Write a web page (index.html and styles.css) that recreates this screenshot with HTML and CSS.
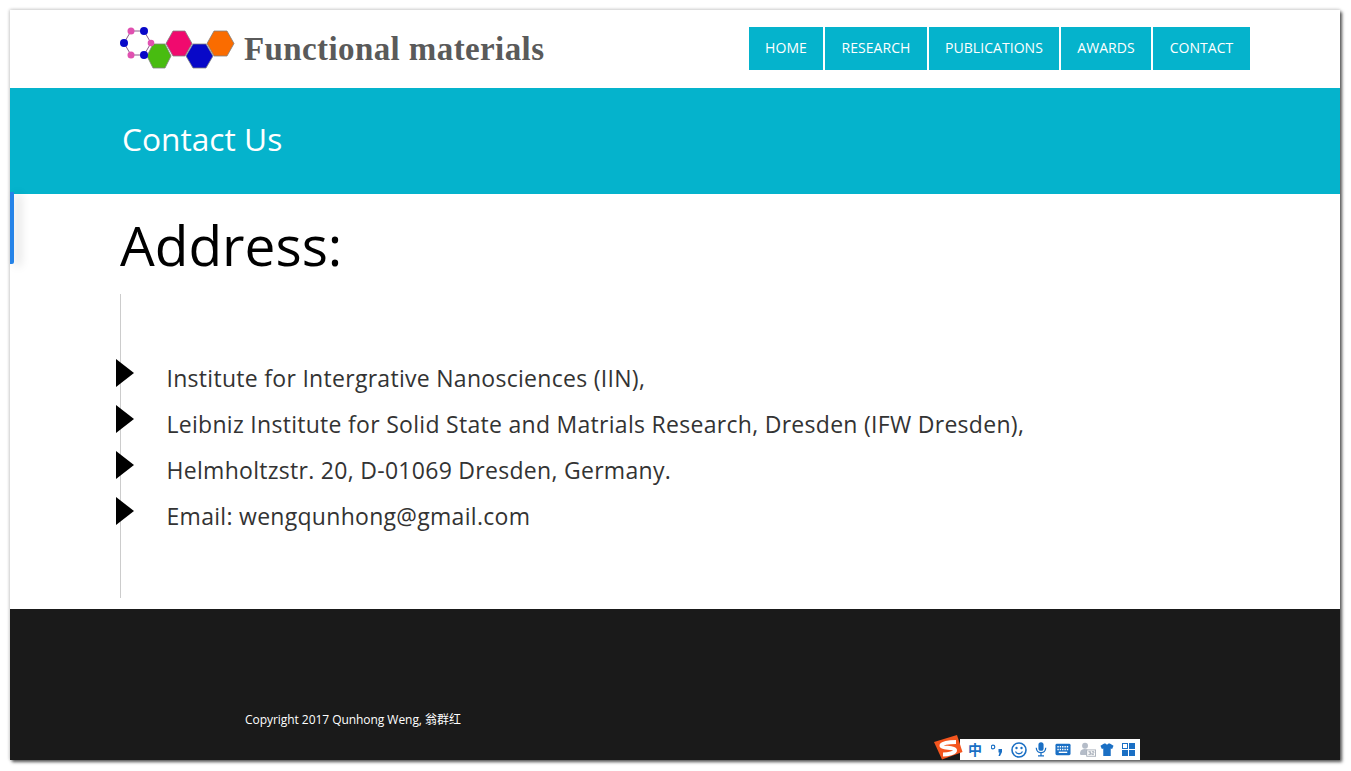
FILE: index.html
```html
<!DOCTYPE html>
<html lang="en">
<head>
<meta charset="utf-8">
<title>Contact Us</title>
<link rel="stylesheet" href="styles.css">
</head>
<body>
<div class="window">
  <header class="top">
    <div class="brand">
      <svg class="logo" width="118" height="44" viewBox="0 0 118 44">
        <path fill="none" stroke="#8a5a8a" d="M13 5H26L33 17L26 29H13L6 17Z"/>
        <g stroke="#808080" stroke-width=".8">
          <path fill="#48bc10" d="M29 30L35 18H47L53 30L47 42H35Z"/>
          <path fill="#f00a6e" d="M48 17.500L55 5H67L74 17.500L67 30H55Z"/>
          <path fill="#0808c8" d="M68 30L75 18H88L95 30L88 42H75Z"/>
          <path fill="#fa6c00" d="M89 17.500L96 5H109L116 17.500L109 30H96Z"/>
        </g>
        <circle cx="13" cy="5" r="3.500" fill="#e050b0"/>
        <circle cx="26" cy="5" r="4" fill="#0808c8"/>
        <circle cx="6" cy="17" r="4" fill="#0808c8"/>
        <circle cx="33" cy="17" r="3.300" fill="#e050b0"/>
        <circle cx="13" cy="29" r="3.500" fill="#e050b0"/>
        <circle cx="26" cy="29" r="4" fill="#0808c8"/>
      </svg>
      <span class="site-name">Functional materials</span>
    </div>
    <nav class="nav">
      <a class="nav-item w74">HOME</a>
      <a class="nav-item w102">RESEARCH</a>
      <a class="nav-item w130">PUBLICATIONS</a>
      <a class="nav-item w90">AWARDS</a>
      <a class="nav-item w97">CONTACT</a>
    </nav>
  </header>
  <section class="banner"><h2 class="banner-title">Contact Us</h2></section>
  <main class="content">
    <span class="side-tab"></span>
    <h1 class="heading">Address:</h1>
    <ul class="address">
      <li class="row"><span class="arrow"></span>Institute for Intergrative Nanosciences (IIN),</li>
      <li class="row"><span class="arrow"></span>Leibniz Institute for Solid State and Matrials Research, Dresden (IFW Dresden),</li>
      <li class="row"><span class="arrow"></span>Helmholtzstr. 20, D-01069 Dresden, Germany.</li>
      <li class="row"><span class="arrow"></span>Email: wengqunhong@gmail.com</li>
    </ul>
  </main>
  <footer class="footer">
    <p class="copyright">Copyright 2017 Qunhong Weng, 翁群红</p>
    <div class="ime">
      <svg class="ime-s" width="30" height="26" viewBox="0 0 30 26">
        <path fill="#f4551e" d="M0 8L23 1L28.500 18L8 25.500Z"/>
        <path fill="none" stroke="#fff" stroke-width="4" d="M22 8C15 8 7 9 7.500 12C8 15 20 12.500 21 16C21.500 19 14 20.500 9 20.500"/>
      </svg>
      <div class="ime-bar">
        <span class="ime-zh">中</span>
        <svg class="plus1" width="11" height="14" viewBox="0 0 11 14"><circle cx="2" cy="4" r="1.800" fill="none" stroke="#1a6fc4" stroke-width="1.200"/><path fill="#1a6fc4" d="M7.500 6h3.500v3l-2 4h-1.500l1-3.500h-1z"/></svg>
        <svg class="plus1" width="16" height="16" viewBox="0 0 16 16"><circle cx="8" cy="8" r="7" fill="none" stroke="#1a6fc4" stroke-width="1.600"/><circle cx="5.500" cy="6" r="1.200" fill="#1a6fc4"/><circle cx="10.500" cy="6" r="1.200" fill="#1a6fc4"/><path d="M4.500 9.500C6 12.500 10 12.500 11.500 9.500" fill="none" stroke="#1a6fc4" stroke-width="1.300"/></svg>
        <svg width="12" height="17" viewBox="0 0 14 17"><rect x="4" y="0" width="6" height="10" rx="3" fill="#1a6fc4"/><path d="M1.500 6.500C1.500 14 12.500 14 12.500 6.500M7 12V15.500M3.500 16H10.500" fill="none" stroke="#1a6fc4" stroke-width="1.500"/></svg>
        <svg width="16" height="13" viewBox="0 0 17 13"><rect x=".5" y=".5" width="16" height="12" rx="1.500" fill="#1a6fc4"/><path d="M2.500 3.500H14.500M2.500 6.500H14.500" stroke="#fff" stroke-width="1.500" stroke-dasharray="1.500 1"/><path d="M4 9.500H13" stroke="#fff" stroke-width="1.500"/></svg>
        <svg class="plus1" width="16" height="17" viewBox="0 0 19 17"><circle cx="6" cy="4" r="3.500" fill="#b4bcc8"/><path d="M0 14C0 9 3 8 6 8C8 8 9 9 10 10V15H1Z" fill="#b4bcc8"/><rect x="8" y="9" width="10.500" height="7.500" fill="#fff" stroke="#a0a8b4"/><path d="M10 11H12.500V12.500H10.500M12.500 12.500V14.500H10M14 11H16.500V12.800H14V14.500H16.500" fill="none" stroke="#a0a8b4"/></svg>
        <svg class="minus4" width="14" height="14" viewBox="0 0 15 15"><path fill="#1a6fc4" d="M4.500 .5H6C6.500 2 8.500 2 9 .5H10.500L14.500 3L13 6.500L11.500 6V14H3.500V6L2 6.500L.5 3Z"/></svg>
        <svg width="13" height="13" viewBox="0 0 13 13"><rect x=".5" y=".5" width="5" height="5" fill="none" stroke="#1a6fc4"/><g fill="#1a6fc4"><rect x="7" y="0" width="6" height="6"/><rect x="0" y="7" width="6" height="6"/><rect x="7" y="7" width="6" height="6"/></g></svg>
      </div>
    </div>
  </footer>
</div>
</body>
</html>
```
FILE: styles.css
```css
* { box-sizing: border-box; }
html, body { margin: 0; height: 100%; background: #fff; overflow: hidden; }
body { padding: 10px 11px 11px 10px; font-family: "Open Sans", sans-serif; }
.window { display: flex; flex-direction: column; height: 750px; background: #fff; box-shadow: 2px 2px 3px #555, 0 -1px 3px #ddd, -1px 0 3px #ddd; position: relative; }
.top { height: 78px; display: flex; justify-content: space-between; padding: 13px 90px 0 108px; }
.brand { display: flex; align-items: flex-start; gap: 8px; height: 47px; }
.logo { display: block; margin-top: 3px; flex: none; }
.site-name { font-family: "Liberation Serif", serif; font-weight: 700; font-size: 33px; letter-spacing: .4px; line-height: 52px; color: #5a5a5a; white-space: nowrap; }
.nav { display: flex; gap: 2px; height: 43px; margin-top: 4px; }
.nav-item { display: flex; align-items: center; justify-content: center; background: #05b3cc; color: #fff; font-size: 14px; letter-spacing: .05px; padding-bottom: 2px; }
.w74 { width: 74px; }
.w102 { width: 102px; }
.w130 { width: 130px; }
.w90 { width: 90px; }
.w97 { width: 97px; }
.banner { height: 106px; background: #05b3cc; display: flex; align-items: center; padding: 0 0 4px 112px; }
.banner-title { margin: 0; font-size: 31.700px; font-weight: 400; color: #fff; line-height: 1.4; }
.content { height: 415px; padding: 12px 0 0 110px; position: relative; }
.side-tab { position: absolute; left: 0; top: -2px; width: 4px; height: 72px; background: #2583e8; box-shadow: 6px 2px 10px rgba(0,0,0,.18); border-radius: 0 0 2px 0; }
.heading { margin: 0; font-size: 55px; font-weight: 400; color: #000; line-height: 78px; }
.address { list-style: none; margin: 10px 0 0; padding: 61px 0 0 45.500px; height: 304px; border-left: 1px solid #ccc; }
.row { position: relative; height: 46px; font-size: 23px; letter-spacing: .29px; line-height: 46px; color: #333; white-space: nowrap; }
.arrow { position: absolute; left: -50.500px; top: 4px; width: 0; height: 0; border-style: solid; border-width: 14px 0 14px 18px; border-color: transparent transparent transparent #000; }
.footer { flex: 1; background: #1a1a1a; position: relative; padding: 101px 0 0 235px; }
.copyright { margin: 0; font-size: 12px; letter-spacing: -.05px; line-height: 20px; color: #fff; font-family: "Open Sans", "Noto Sans CJK SC", sans-serif; }
.ime { position: absolute; left: 924px; bottom: 0; width: 206px; height: 26px; display: flex; align-items: flex-end; }
.ime-s { position: absolute; left: 0; top: 0; z-index: 1; }
.ime-bar { margin-left: 26px; flex: 1; height: 21px; background: #fff; display: flex; align-items: center; gap: 8px; padding-left: 8px; }
.ime-zh { width: 14px; font-family: "Noto Sans CJK SC", sans-serif; font-size: 14px; font-weight: 700; color: #1a6fc4; line-height: 21px; }
.plus1 { margin-left: 1px; }
.minus4 { margin-left: -4px; }
```
